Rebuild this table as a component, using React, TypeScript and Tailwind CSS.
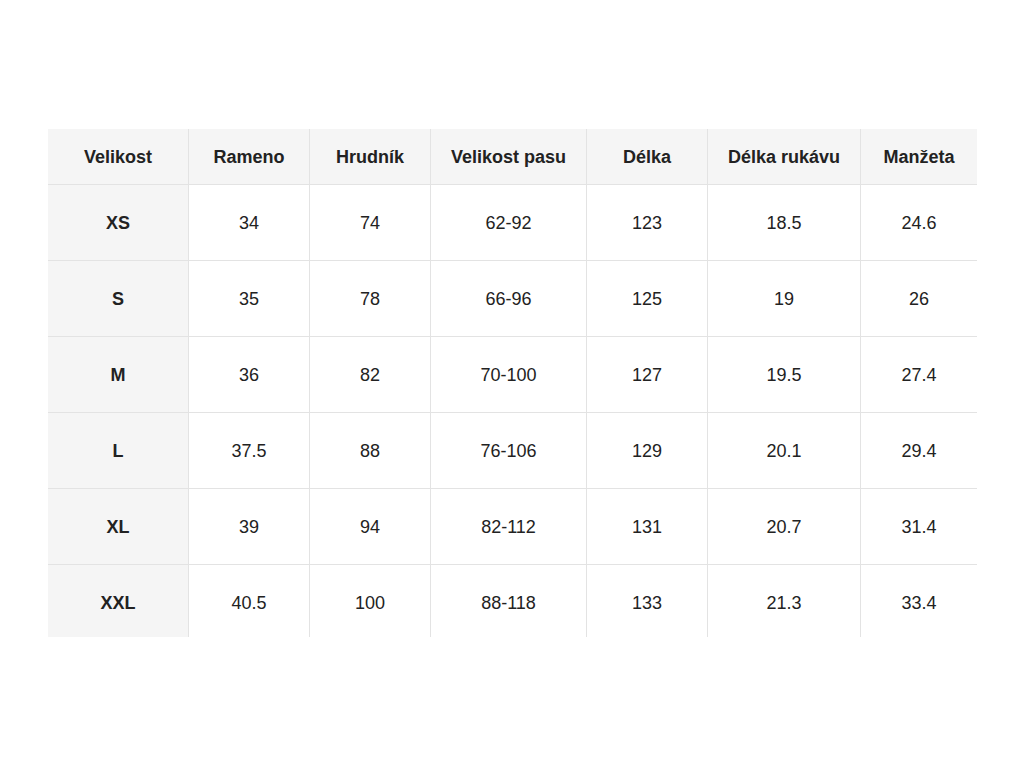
import React from "react";

const headers = ["Velikost", "Rameno", "Hrudník", "Velikost pasu", "Délka", "Délka rukávu", "Manžeta"];
const rows = [
  ["XS", "34", "74", "62-92", "123", "18.5", "24.6"],
  ["S", "35", "78", "66-96", "125", "19", "26"],
  ["M", "36", "82", "70-100", "127", "19.5", "27.4"],
  ["L", "37.5", "88", "76-106", "129", "20.1", "29.4"],
  ["XL", "39", "94", "82-112", "131", "20.7", "31.4"],
  ["XXL", "40.5", "100", "88-118", "133", "21.3", "33.4"],
];

export default function App() {
  return (
    <div className="w-[1024px] h-[768px] bg-white pt-[129px] pl-[48px]" style={{ fontFamily: '"Liberation Sans", Arial, sans-serif' }}>
      <div className="w-[929px] h-[508px] overflow-hidden">
        <div className="grid grid-cols-[141px_121px_121px_156px_121px_153px_116px] w-[929px] text-[18px] text-[#222]">
          {headers.map((h, i) => (
            <div
              key={h}
              className={`h-[56px] pt-[2px] flex items-center justify-center font-bold bg-[#f5f5f5] border-b border-[#e3e3e3] ${i < 6 ? "border-r" : ""}`}
            >
              {h}
            </div>
          ))}
          {rows.map((r, ri) =>
            r.map((c, ci) => (
              <div
                key={`${ri}-${ci}`}
                className={`h-[76px] pt-[2px] flex items-center justify-center border-[#e3e3e3] border-b ${ci < 6 ? "border-r" : ""} ${ci === 0 ? "bg-[#f5f5f5] font-bold" : "bg-white"}`}
              >
                {c}
              </div>
            ))
          )}
        </div>
      </div>
    </div>
  );
}
